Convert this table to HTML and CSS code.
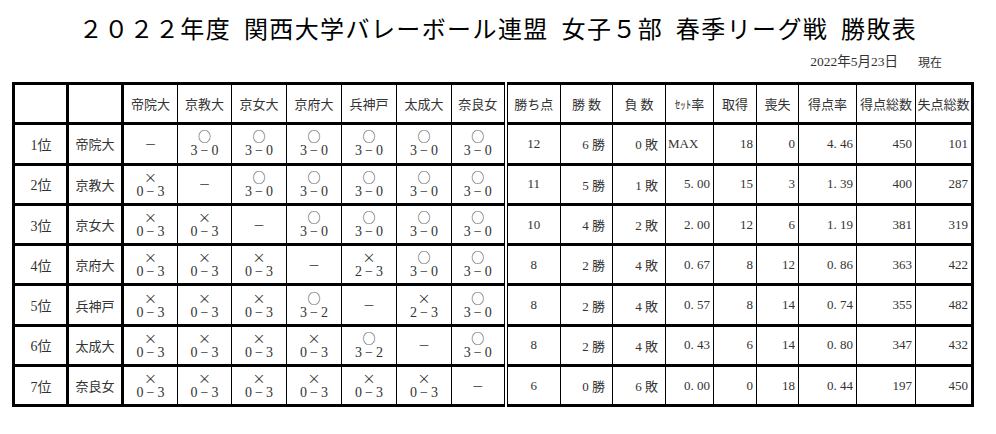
FILE: index.html
```html
<!DOCTYPE html>
<html lang="ja">
<head>
<meta charset="utf-8">
<title>勝敗表</title>
<link rel="stylesheet" href="styles.css">
</head>
<body>
<div class="page">
  <h1 class="title">２０２２年度 関西大学バレーボール連盟 女子５部 春季リーグ戦 勝敗表</h1>
  <div class="date"><span>2022年5月23日</span><span class="now">現在</span></div>
  <table class="standings">
    <colgroup>
      <col class="w54"><col class="w55">
      <col class="w55"><col class="w54"><col class="w55"><col class="w55"><col class="w55"><col class="w55"><col class="w54">
      <col class="w55"><col class="w52"><col class="w53"><col class="w48"><col class="w43"><col class="w42"><col class="w58"><col class="w59"><col class="w57">
    </colgroup>
    <thead>
      <tr>
        <th class="rank"></th><th class="name"></th>
        <th>帝院大</th><th>京教大</th><th>京女大</th><th>京府大</th><th>兵神戸</th><th>太成大</th><th class="last">奈良女</th>
        <th>勝ち点</th><th>勝 数</th><th>負 数</th><th><span class="kana">ｾｯﾄ</span>率</th><th>取得</th><th>喪失</th><th>得点率</th><th>得点総数</th><th>失点総数</th>
      </tr>
    </thead>
    <tbody>
      <tr>
        <td class="rank">1位</td><td class="name">帝院大</td>
        <td class="m"><span class="bar">－</span></td>
        <td class="m"><span class="mk">○</span><span class="sc">3<span class="dash">−</span>0</span></td>
        <td class="m"><span class="mk">○</span><span class="sc">3<span class="dash">−</span>0</span></td>
        <td class="m"><span class="mk">○</span><span class="sc">3<span class="dash">−</span>0</span></td>
        <td class="m"><span class="mk">○</span><span class="sc">3<span class="dash">−</span>0</span></td>
        <td class="m"><span class="mk">○</span><span class="sc">3<span class="dash">−</span>0</span></td>
        <td class="m last"><span class="mk">○</span><span class="sc">3<span class="dash">−</span>0</span></td>
        <td class="c">12</td><td class="wl">6 勝</td><td class="wl">0 敗</td><td class="l">MAX</td><td class="r">18</td><td class="r">0</td><td class="r">4. 46</td><td class="r">450</td><td class="r">101</td>
      </tr>
      <tr>
        <td class="rank">2位</td><td class="name">京教大</td>
        <td class="m"><span class="mk">×</span><span class="sc">0<span class="dash">−</span>3</span></td>
        <td class="m"><span class="bar">－</span></td>
        <td class="m"><span class="mk">○</span><span class="sc">3<span class="dash">−</span>0</span></td>
        <td class="m"><span class="mk">○</span><span class="sc">3<span class="dash">−</span>0</span></td>
        <td class="m"><span class="mk">○</span><span class="sc">3<span class="dash">−</span>0</span></td>
        <td class="m"><span class="mk">○</span><span class="sc">3<span class="dash">−</span>0</span></td>
        <td class="m last"><span class="mk">○</span><span class="sc">3<span class="dash">−</span>0</span></td>
        <td class="c">11</td><td class="wl">5 勝</td><td class="wl">1 敗</td><td class="r">5. 00</td><td class="r">15</td><td class="r">3</td><td class="r">1. 39</td><td class="r">400</td><td class="r">287</td>
      </tr>
      <tr>
        <td class="rank">3位</td><td class="name">京女大</td>
        <td class="m"><span class="mk">×</span><span class="sc">0<span class="dash">−</span>3</span></td>
        <td class="m"><span class="mk">×</span><span class="sc">0<span class="dash">−</span>3</span></td>
        <td class="m"><span class="bar">－</span></td>
        <td class="m"><span class="mk">○</span><span class="sc">3<span class="dash">−</span>0</span></td>
        <td class="m"><span class="mk">○</span><span class="sc">3<span class="dash">−</span>0</span></td>
        <td class="m"><span class="mk">○</span><span class="sc">3<span class="dash">−</span>0</span></td>
        <td class="m last"><span class="mk">○</span><span class="sc">3<span class="dash">−</span>0</span></td>
        <td class="c">10</td><td class="wl">4 勝</td><td class="wl">2 敗</td><td class="r">2. 00</td><td class="r">12</td><td class="r">6</td><td class="r">1. 19</td><td class="r">381</td><td class="r">319</td>
      </tr>
      <tr>
        <td class="rank">4位</td><td class="name">京府大</td>
        <td class="m"><span class="mk">×</span><span class="sc">0<span class="dash">−</span>3</span></td>
        <td class="m"><span class="mk">×</span><span class="sc">0<span class="dash">−</span>3</span></td>
        <td class="m"><span class="mk">×</span><span class="sc">0<span class="dash">−</span>3</span></td>
        <td class="m"><span class="bar">－</span></td>
        <td class="m"><span class="mk">×</span><span class="sc">2<span class="dash">−</span>3</span></td>
        <td class="m"><span class="mk">○</span><span class="sc">3<span class="dash">−</span>0</span></td>
        <td class="m last"><span class="mk">○</span><span class="sc">3<span class="dash">−</span>0</span></td>
        <td class="c">8</td><td class="wl">2 勝</td><td class="wl">4 敗</td><td class="r">0. 67</td><td class="r">8</td><td class="r">12</td><td class="r">0. 86</td><td class="r">363</td><td class="r">422</td>
      </tr>
      <tr>
        <td class="rank">5位</td><td class="name">兵神戸</td>
        <td class="m"><span class="mk">×</span><span class="sc">0<span class="dash">−</span>3</span></td>
        <td class="m"><span class="mk">×</span><span class="sc">0<span class="dash">−</span>3</span></td>
        <td class="m"><span class="mk">×</span><span class="sc">0<span class="dash">−</span>3</span></td>
        <td class="m"><span class="mk">○</span><span class="sc">3<span class="dash">−</span>2</span></td>
        <td class="m"><span class="bar">－</span></td>
        <td class="m"><span class="mk">×</span><span class="sc">2<span class="dash">−</span>3</span></td>
        <td class="m last"><span class="mk">○</span><span class="sc">3<span class="dash">−</span>0</span></td>
        <td class="c">8</td><td class="wl">2 勝</td><td class="wl">4 敗</td><td class="r">0. 57</td><td class="r">8</td><td class="r">14</td><td class="r">0. 74</td><td class="r">355</td><td class="r">482</td>
      </tr>
      <tr>
        <td class="rank">6位</td><td class="name">太成大</td>
        <td class="m"><span class="mk">×</span><span class="sc">0<span class="dash">−</span>3</span></td>
        <td class="m"><span class="mk">×</span><span class="sc">0<span class="dash">−</span>3</span></td>
        <td class="m"><span class="mk">×</span><span class="sc">0<span class="dash">−</span>3</span></td>
        <td class="m"><span class="mk">×</span><span class="sc">0<span class="dash">−</span>3</span></td>
        <td class="m"><span class="mk">○</span><span class="sc">3<span class="dash">−</span>2</span></td>
        <td class="m"><span class="bar">－</span></td>
        <td class="m last"><span class="mk">○</span><span class="sc">3<span class="dash">−</span>0</span></td>
        <td class="c">8</td><td class="wl">2 勝</td><td class="wl">4 敗</td><td class="r">0. 43</td><td class="r">6</td><td class="r">14</td><td class="r">0. 80</td><td class="r">347</td><td class="r">432</td>
      </tr>
      <tr>
        <td class="rank">7位</td><td class="name">奈良女</td>
        <td class="m"><span class="mk">×</span><span class="sc">0<span class="dash">−</span>3</span></td>
        <td class="m"><span class="mk">×</span><span class="sc">0<span class="dash">−</span>3</span></td>
        <td class="m"><span class="mk">×</span><span class="sc">0<span class="dash">−</span>3</span></td>
        <td class="m"><span class="mk">×</span><span class="sc">0<span class="dash">−</span>3</span></td>
        <td class="m"><span class="mk">×</span><span class="sc">0<span class="dash">−</span>3</span></td>
        <td class="m"><span class="mk">×</span><span class="sc">0<span class="dash">−</span>3</span></td>
        <td class="m last"><span class="bar">－</span></td>
        <td class="c">6</td><td class="wl">0 勝</td><td class="wl">6 敗</td><td class="r">0. 00</td><td class="r">0</td><td class="r">18</td><td class="r">0. 44</td><td class="r">197</td><td class="r">450</td>
      </tr>
    </tbody>
  </table>
</div>
</body>
</html>
```

FILE: styles.css
```css
html, body {
  margin: 0;
  padding: 0;
  background: #fff;
}
.page {
  width: 996px;
  padding: 0 0 0 12px;
  box-sizing: border-box;
}
.title {
  margin: 0;
  padding-top: 11px;
  height: 33px;
  font-family: "Noto Sans CJK JP", sans-serif;
  font-weight: 400;
  font-size: 24px;
  line-height: 33px;
  letter-spacing: 1.4px;
  word-spacing: 6px;
  color: #000;
  text-align: center;
  padding-right: 12px;
}
.date {
  display: flex;
  justify-content: flex-end;
  gap: 20px;
  padding-right: 54px;
  height: 38px;
  padding-top: 9px;
  box-sizing: border-box;
  font-family: "Liberation Serif", "Noto Sans CJK JP", serif;
  font-size: 13.5px;
  line-height: 18px;
  color: #333;
}
.date .now {
  font-family: "Noto Sans CJK JP", sans-serif;
  font-size: 12px;
}
.standings {
  border-collapse: collapse;
  table-layout: fixed;
  width: 962px;
  border: 3px solid #000;
  font-family: "Liberation Serif", "Noto Sans CJK JP", serif;
  font-size: 13px;
  color: #333;
}
.w42 { width: 42px; } .w43 { width: 43px; } .w48 { width: 48px; }
.w52 { width: 52px; } .w53 { width: 53px; } .w54 { width: 54px; }
.w55 { width: 55px; } .w57 { width: 57px; } .w58 { width: 58px; }
.w59 { width: 59px; }
.standings tr {
  height: 40.3px;
  border-bottom: 3px solid #000;
}
.standings th,
.standings td {
  border-left: 1px solid #000;
  border-right: 1px solid #000;
  padding: 0 3px;
  vertical-align: middle;
  white-space: nowrap;
  overflow: hidden;
}
.standings th {
  font-family: "Noto Sans CJK JP", sans-serif;
  font-weight: 400;
  font-size: 13px;
  text-align: center;
  padding: 0;
}
.standings .rank {
  border-right: 3px solid #000;
  text-align: center;
  font-family: "Liberation Serif", "Noto Sans CJK JP", serif;
  font-size: 14px;
  padding-left: 4px;
}
.standings td.name {
  border-right: 3px solid #000;
  text-align: center;
  font-family: "Noto Sans CJK JP", sans-serif;
  font-size: 13px;
}
.standings th.name {
  border-right: 3px solid #000;
}
.standings .last {
  border-right: 4px double #000;
}
.standings td.m {
  text-align: center;
  padding: 0;
}
.mk {
  display: block;
  height: 12px;
  line-height: 9px;
  font-family: "Noto Sans CJK JP", sans-serif;
  font-size: 13px;
  color: #333;
}
.sc {
  display: block;
  height: 13px;
  line-height: 16px;
  font-size: 14px;
}
.dash {
  display: inline-block;
  margin: 0 3px;
  font-size: 14px;
}
.bar {
  font-family: "Noto Sans CJK JP", sans-serif;
  font-size: 12px;
}
.kana {
  font-size: 11px;
}
.standings .c { text-align: center; }
.standings .r { text-align: right; }
.standings .l { text-align: left; padding-left: 2px; }
.standings .wl { text-align: right; padding-right: 7px; }
```
